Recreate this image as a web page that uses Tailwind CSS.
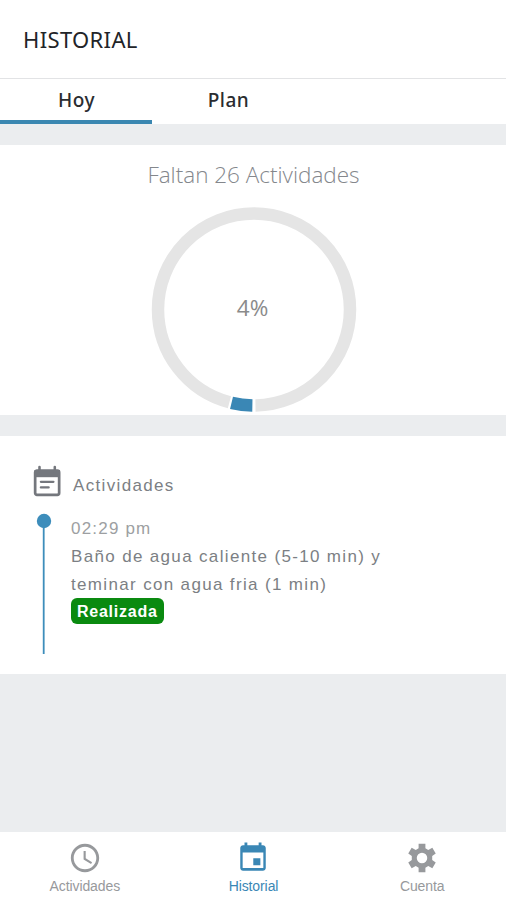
<!DOCTYPE html>
<html lang="es">
<head>
    <meta charset="UTF-8">
    <meta name="viewport" content="width=device-width, initial-scale=1.0">
    <title>Historial</title>
    <script src="https://cdn.jsdelivr.net/npm/@tailwindcss/browser@4"></script>
</head>
<body class="h-screen flex flex-col overflow-hidden bg-[#ebedef] font-['Liberation_Sans',sans-serif]">

    <header class="h-[79px] shrink-0 bg-white border-b border-[#e2e3e5] flex items-center pl-[23px] pt-[1px]">
        <h1 class="font-['Noto_Sans',sans-serif] text-[22px] tracking-[0.35px] text-[#222428]">HISTORIAL</h1>
    </header>

    <nav class="h-[45px] shrink-0 bg-white flex font-['Noto_Sans',sans-serif] font-medium text-[19px] tracking-[0.5px] text-[#2a2c30]">
        <button class="w-[152px] border-b-4 border-[#3a87b1] pt-[2px] pl-[1px]">Hoy</button>
        <button class="w-[152px] border-b-4 border-transparent pt-[2px] pl-[1px]">Plan</button>
    </nav>

    <!-- Progreso -->
    <section class="mt-[21px] h-[270px] shrink-0 bg-white flex flex-col items-center">
        <h2 class="mt-[14px] ml-[1px] h-8 leading-8 font-['Open_Sans',sans-serif] font-light text-[22.5px] text-[#84878c] whitespace-nowrap">Faltan 26 Actividades</h2>
        <svg class="mt-[15px] ml-[1px] shrink-0" width="206" height="206" viewBox="0 0 206 206">
            <g fill="none" stroke-width="12.5" transform="rotate(90 103 103.5)">
                <circle cx="103" cy="103.5" r="96" pathLength="360" stroke="#e5e5e5" stroke-dasharray="344.2 15.8" stroke-dashoffset="-14.9"/>
                <circle cx="103" cy="103.5" r="96" pathLength="360" stroke="#3a87b5" stroke-dasharray="12.6 347.4" stroke-dashoffset="-1"/>
            </g>
            <text x="101.5" y="110" text-anchor="middle" font-family="Open Sans, sans-serif" font-size="22.5" fill="#8b8b8b">4%</text>
        </svg>
    </section>

    <!-- Lista de actividades -->
    <section class="mt-[21px] h-[238px] shrink-0 bg-white pt-[28px] pl-[29px] tracking-[1.34px] text-[17px] text-[#7c7f84]">
        <div class="flex h-9">
            <svg width="36" height="36" viewBox="0 0 24 24" fill="none" stroke="#74777d" stroke-linecap="round">
                <rect x="4.1" y="4.4" width="16" height="16.2" rx="1.2" stroke-width="1.8"/>
                <path d="M3.6 4h17v4.8h-17z" fill="#74777d" stroke="none"/>
                <path d="M7 2v3M17.2 2v3" stroke-width="1.7"/>
                <path d="M7.9 11.9h8.4M7.9 15.6h5.2" stroke-width="1.5"/>
            </svg>
            <h3 class="pl-[8px] pt-[9px] leading-[26px]">Actividades</h3>
        </div>
        <div class="flex mt-[13px]">
            <svg class="ml-[7px] shrink-0" width="16" height="142" viewBox="0 0 16 142">
                <path d="M7.7 8v133" stroke="#3d8dbb" stroke-width="1.8"/>
                <circle cx="8" cy="8" r="7.2" fill="#3d8dbb"/>
            </svg>
            <div class="pl-[19px] pt-[2px] leading-[28px] whitespace-nowrap">
                <p class="text-[#9d9fa2] tracking-[1.2px]">02:29 pm</p>
                <p>Baño de agua caliente (5-10 min) y</p>
                <p>teminar con agua fria (1 min)</p>
                <span class="block w-[93px] h-[26px] leading-[27px] -mt-[1px] rounded-[6px] bg-[#0a8a10] text-white font-bold text-[16px] tracking-[0.75px] pl-[6px]">Realizada</span>
            </div>
        </div>
    </section>

    <footer class="mt-auto h-[68px] shrink-0 bg-white grid grid-cols-3 text-[14px] tracking-[-0.1px] text-[#97999c]">
        <a class="flex flex-col items-center pt-[9px]">
            <svg class="ml-[1px]" width="34" height="34" viewBox="0 0 24 24" fill="currentColor">
                <path d="M11.99 2C6.47 2 2 6.48 2 12s4.47 10 9.99 10C17.52 22 22 17.52 22 12S17.52 2 11.99 2zM12 20c-4.42 0-8-3.58-8-8s3.58-8 8-8 8 3.58 8 8-3.58 8-8 8zm.5-13H11v6l5.25 3.15.75-1.23-4.5-2.67z"/>
            </svg>
            <span class="leading-[22px] ml-[1px]">Actividades</span>
        </a>
        <a class="flex flex-col items-center pt-[9px] text-[#3a87b5]">
            <svg class="ml-[1px]" width="34" height="34" viewBox="0 0 24 24" fill="currentColor">
                <path d="M17.2 12.2h-5v5h5v-5zM16 1v2H8V1H6v2H5c-1.11 0-1.99.9-1.99 2L3 19c0 1.1.89 2 2 2h14c1.1 0 2-.9 2-2V5c0-1.1-.9-2-2-2h-1V1h-2zm3.3 18H4.7V8.2h14.6V19z"/>
            </svg>
            <span class="leading-[22px] ml-[1px]">Historial</span>
        </a>
        <a class="flex flex-col items-center pt-[9px]">
            <svg class="ml-[1px]" width="34" height="34" viewBox="0 0 24 24" fill="currentColor">
                <path fill-rule="evenodd" d="M9.6 2h4.8v3.2l2 1.15 2.9-1.55 2.4 4.1-2.5 1.75v2.7l2.5 1.75-2.4 4.1-2.9-1.55-2 1.15V22H9.6v-3.2l-2-1.15-2.9 1.55-2.4-4.1 2.5-1.75v-2.7L2.3 8.9l2.4-4.1 2.9 1.55 2-1.15zM12 8.3a3.7 3.7 0 1 0 0 7.4a3.7 3.7 0 1 0 0-7.4z"/>
            </svg>
            <span class="leading-[22px] ml-[1px]">Cuenta</span>
        </a>
    </footer>

</body>
</html>
